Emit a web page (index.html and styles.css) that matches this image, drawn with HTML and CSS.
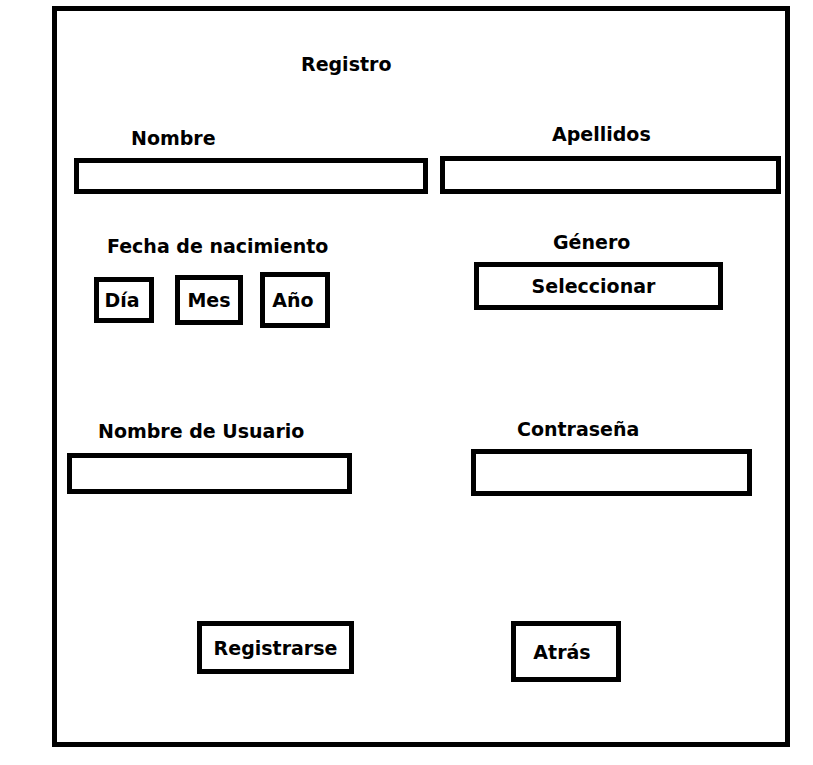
FILE: index.html
```html
<!DOCTYPE html>
<html lang="es">
<head>
<meta charset="utf-8">
<meta name="viewport" content="width=device-width, initial-scale=1">
<title>Registro</title>
<link rel="stylesheet" href="styles.css">
</head>
<body>
<main class="frame">
  <h1 class="title">Registro</h1>
  <form class="form">
    <div class="row names">
      <div class="field first">
        <label class="label" for="nombre">Nombre</label>
        <input class="box" id="nombre" type="text">
      </div>
      <div class="field second surname">
        <label class="label" for="apellidos">Apellidos</label>
        <input class="box" id="apellidos" type="text">
      </div>
    </div>
    <div class="row details">
      <fieldset class="field first birth">
        <legend class="label">Fecha de nacimiento</legend>
        <div class="date">
          <select class="box day" aria-label="Día"><option>Día</option></select>
          <select class="box month" aria-label="Mes"><option>Mes</option></select>
          <select class="box year" aria-label="Año"><option>Año</option></select>
        </div>
      </fieldset>
      <div class="field second gender">
        <label class="label" for="genero">Género</label>
        <select class="box" id="genero"><option>Seleccionar</option></select>
      </div>
    </div>
    <div class="row account">
      <div class="field first user">
        <label class="label" for="usuario">Nombre de Usuario</label>
        <input class="box" id="usuario" type="text">
      </div>
      <div class="field second password">
        <label class="label" for="clave">Contraseña</label>
        <input class="box" id="clave" type="password">
      </div>
    </div>
    <div class="row actions">
      <button class="box first submit" type="submit">Registrarse</button>
      <button class="box second back" type="button">Atrás</button>
    </div>
  </form>
</main>
</body>
</html>
```
FILE: styles.css
```css
* {
  box-sizing: border-box;
}

body {
  margin: 6px 23px 18px 52px;
  background: #fff;
  color: #000;
  font: bold 19px/24px "DejaVu Sans", Verdana, sans-serif;
}

.frame {
  border: 5px solid #000;
  padding: 41px 0 60px;
}

.title {
  margin: 0 0 46px;
  padding-left: 244px;
  font: inherit;
}

/* Side gutters, both fields and the space between them share the width. */
.row {
  display: grid;
}

.first {
  grid-column: 2;
}

.second {
  grid-column: 4;
}

.names {
  grid-template-columns: 17fr 354fr 12fr 341fr 4fr;
  align-items: end;
  margin-bottom: 36px;
}

.details {
  grid-template-columns: 37fr 236fr 144fr 249fr 62fr;
  align-items: start;
  margin-bottom: 89px;
}

.account {
  grid-template-columns: 10fr 285fr 119fr 281fr 33fr;
  align-items: center;
  margin-bottom: 125px;
}

.actions {
  grid-template-columns: 140fr 157fr 157fr 110fr 164fr;
  align-items: start;
}

.field {
  display: flex;
  flex-direction: column;
  gap: 8px;
  min-width: 0;
  margin: 0;
  border: 0;
  padding: 0;
}

.label {
  padding: 0 0 0 57px;
  white-space: nowrap;
}

.box {
  width: 100%;
  height: 36px;
  margin: 0;
  border: 5px solid #000;
  border-radius: 0;
  padding: 0;
  background: #fff;
  color: inherit;
  font: inherit;
  text-align: center;
  text-align-last: center;
  appearance: none;
}

.surname {
  gap: 10px;
}

.surname .label {
  padding-left: 112px;
}

.surname .box {
  height: 38px;
}

.birth .label {
  padding-top: 4px;
  padding-left: 13px;
}

.date {
  display: grid;
  grid-template-columns: 60fr 21fr 68fr 17fr 70fr;
  align-items: center;
  padding-top: 14px;
}

.day {
  height: 46px;
  padding-right: 4px;
}

.month {
  grid-column: 3;
  height: 50px;
}

.year {
  grid-column: 5;
  height: 56px;
  padding-right: 4px;
}

.gender .label {
  padding-left: 79px;
}

.gender .box {
  height: 48px;
  padding-right: 10px;
}

.user {
  gap: 10px;
}

.user .label {
  padding-left: 31px;
}

.user .box {
  height: 41px;
}

.password .label {
  padding-left: 46px;
}

.password .box {
  height: 47px;
}

.submit {
  height: 53px;
}

.back {
  height: 61px;
  padding-right: 8px;
}
```
